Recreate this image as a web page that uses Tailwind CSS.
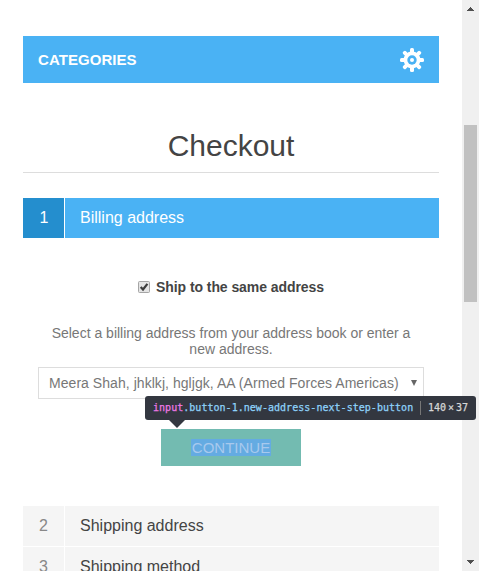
<!DOCTYPE html>
<html lang="en">
<head>
<meta charset="utf-8">
<title>Checkout</title>
<script src="https://cdn.jsdelivr.net/npm/@tailwindcss/browser@4"></script>
</head>
<body class="flex h-[571px] w-[479px] overflow-hidden bg-white font-['Liberation_Sans',Arial,sans-serif] text-sm text-[#777]">
<main class="w-[462px] shrink-0 pl-[23px] pr-[23px] pt-9">
  <header class="flex h-[47px] items-center justify-between bg-[#4ab2f4] pl-[15px] pr-[15px]">
    <span class="text-[15px] font-bold leading-none tracking-[0.06px] text-white">CATEGORIES</span>
    <svg class="h-6 w-6" viewBox="-12 -12 24 24" fill="#fff">
      <g>
        <rect x="-2" y="-12" width="4" height="24" rx="1.5"/>
        <rect x="-2" y="-12" width="4" height="24" rx="1.5" transform="rotate(45)"/>
        <rect x="-2" y="-12" width="4" height="24" rx="1.5" transform="rotate(90)"/>
        <rect x="-2" y="-12" width="4" height="24" rx="1.5" transform="rotate(135)"/>
      </g>
      <circle r="8.4"/>
      <circle r="4.7" fill="#4ab2f4"/>
      <circle r="2"/>
    </svg>
  </header>
  <h1 class="mt-[37px] h-[53px] border-b border-[#ddd] pt-[9px] text-center text-[30px] leading-[34px] text-[#444]">Checkout</h1>
  <section class="mt-[25px]">
    <div class="flex h-10 gap-px text-base leading-[39px] text-white">
      <span class="w-[41px] bg-[#248ece] pl-px text-center">1</span>
      <h2 class="flex-1 bg-[#4ab2f4] pl-[15px]">Billing address</h2>
    </div>
    <div class="flex h-[268px] flex-col px-[15px] pt-[41px]">
      <label class="flex h-4 items-center justify-center gap-[6px] text-sm font-bold text-[#444]">
        <svg class="h-[13px] w-[12px]" viewBox="0 0 12 13">
          <rect x=".5" y=".5" width="11" height="11" rx="1" fill="#e4e4e4" stroke="#a5a5a5"/>
          <path d="M2.7 6l2.3 2.5L9.4 2.8" fill="none" stroke="#3c3c3c" stroke-width="2.2"/>
        </svg>
        <span class="leading-4 tracking-[-0.07px]">Ship to the same address</span>
      </label>
      <p class="mt-[30px] text-center leading-4">Select a billing address from your address book or enter a<br>new address.</p>
      <div class="relative mt-[10px] flex h-8 shrink-0 items-center justify-between border border-[#ddd] pl-[10px] pr-[6px]">
        <span class="whitespace-nowrap leading-4 tracking-[0.05px]">Meera Shah, jhklkj, hgljgk, AA (Armed Forces Americas)</span>
        <svg class="h-[6px] w-[6px]" viewBox="0 0 6 6"><path d="M0 0h6L3 6z" fill="#666"/></svg>
        <div class="absolute left-[106px] top-[28px] z-10 flex h-6 w-[331px] items-center rounded-[3px] bg-[#333740] pl-2 font-['DejaVu_Sans_Mono',monospace] text-[10px] font-bold leading-none text-[#8ed3fb]">
          <span class="w-[260px] whitespace-nowrap font-normal tracking-[0.03px] [-webkit-text-stroke:0.25px_currentColor]"><span class="text-[#ee78e6]">input</span>.button-1.new-address-next-step-button</span>
          <span class="ml-[7px] h-[14px] w-px bg-[#777]"></span>
          <span class="ml-[7px] flex items-center font-normal text-[#d7d7d7] [-webkit-text-stroke:0.25px_currentColor]">140<span class="w-[10px] text-center">×</span>37</span>
          <svg class="absolute left-[24px] top-6 h-2 w-4" viewBox="0 0 16 8"><path d="M0 0h16L8 8z" fill="#333740"/></svg>
        </div>
      </div>
      <button class="mt-[30px] flex h-[37px] w-[140px] shrink-0 items-center justify-center self-center bg-[#73bbb1] text-[15px] text-[#a8c9ed]"><span class="h-[17px] w-[80px] bg-[#64abe2] text-center leading-[17px]">CONTINUE</span></button>
    </div>
    <div class="flex flex-col gap-px text-base leading-[39px] text-[#444]">
      <div class="flex h-10 gap-px"><span class="w-[41px] bg-[#f5f5f5] text-center text-[#888]">2</span><h2 class="flex-1 bg-[#f5f5f5] pl-[15px]">Shipping address</h2></div>
      <div class="flex h-10 gap-px"><span class="w-[41px] bg-[#f5f5f5] text-center text-[#888]">3</span><h2 class="flex-1 bg-[#f5f5f5] pl-[15px]">Shipping method</h2></div>
    </div>
  </section>
</main>
<aside class="flex h-[571px] w-[17px] shrink-0 flex-col items-center bg-[#f0f0f0] pt-[7px]">
  <svg class="h-1 w-[7px] shrink-0" viewBox="0 0 7 4" shape-rendering="crispEdges"><path d="M3 0h1v1h1v1h1v1h1v1H0V3h1V2h1V1h1z" fill="#505050"/></svg>
  <div class="mt-[114px] h-[177px] w-[13px] shrink-0 bg-[#c1c1c1]"></div>
  <svg class="mt-[258px] h-1 w-[7px] shrink-0" viewBox="0 0 7 4" shape-rendering="crispEdges"><path d="M0 0h7v1H6v1H5v1H4v1H3V3H2V2H1V1H0z" fill="#505050"/></svg>
</aside>
</body>
</html>
